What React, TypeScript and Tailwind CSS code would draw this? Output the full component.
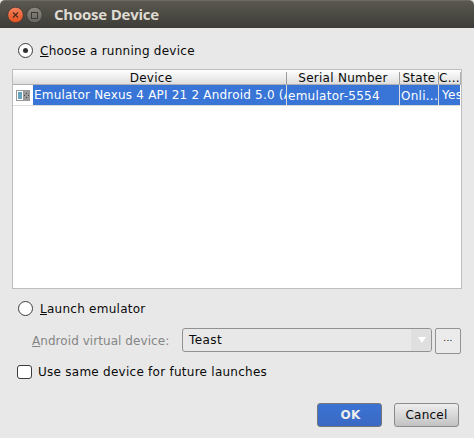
import type { ReactNode } from "react";

function Radio({ checked }: { checked?: boolean }) {
  return (
    <span className="flex size-[15px] shrink-0 items-center justify-center rounded-full border border-[#3c3c3c] bg-white">
      {checked && <span className="size-[5px] rounded-full bg-[#303030]" />}
    </span>
  );
}

function Head({ children, className }: { children: ReactNode; className: string }) {
  return <div className={"flex h-3 items-center justify-center pt-0.5 whitespace-nowrap " + className}>{children}</div>;
}

export default function App() {
  return (
    <div className="flex h-[438px] w-[474px] flex-col overflow-hidden bg-[#e8e8e8] font-['DejaVu_Sans',sans-serif] text-[12px] leading-[15px] tracking-[0.26px] text-[#0a0a0a]">
      <header className="flex h-7 shrink-0 items-center rounded-t-[5px] border-t border-[#6b6962] bg-linear-to-b from-[#5a5850] to-[#3d3c37] pl-[7px]">
        <svg width="36" height="18" viewBox="0 0 36 18" className="shrink-0">
          <defs>
            <linearGradient id="close" x2="0" y2="1">
              <stop stopColor="#f4825d" />
              <stop offset="1" stopColor="#e2501f" />
            </linearGradient>
            <linearGradient id="max" x2="0" y2="1">
              <stop stopColor="#8b8981" />
              <stop offset="1" stopColor="#66645e" />
            </linearGradient>
          </defs>
          <circle cx="8.5" cy="9" r="7.8" fill="url(#close)" stroke="#36342f" strokeWidth=".7" />
          <path d="M6 6.5l5 5M11 6.5l-5 5" stroke="#48291c" strokeWidth="1.1" />
          <circle cx="27.5" cy="9" r="7.8" fill="url(#max)" stroke="#36342f" strokeWidth=".7" />
          <rect x="24.5" y="6.5" width="6" height="6" fill="none" stroke="#3b3a35" />
        </svg>
        <h1 className="ml-[11px] font-['Open_Sans',sans-serif] text-[15px] font-bold tracking-[-0.22px] whitespace-nowrap text-[#dfdbd2]">Choose Device</h1>
      </header>

      <label className="mt-[15px] ml-[18px] flex h-[15px] items-center gap-[7px] whitespace-nowrap">
        <Radio checked />
        <span className="mt-0.5"><u>C</u>hoose a running device</span>
      </label>

      <section className="mt-[11px] ml-3 flex h-[220px] w-[450px] shrink-0 flex-col border border-[#bdbdbd] bg-white">
        <div className="flex h-[15px] items-center border-b border-[#b0b0b0] bg-linear-to-b from-white to-[#dedede] pt-px">
          <Head className="w-[274px] border-r border-[#9c9c9c] pl-[3px]">Device</Head>
          <Head className="w-[113px] border-r border-[#9c9c9c]">Serial Number</Head>
          <Head className="w-[39px] border-r border-[#9c9c9c]">State</Head>
          <Head className="w-[22px] border-r border-[#b0b0b0]">C...</Head>
        </div>
        <div className="flex h-[21px] w-[447px] border-b border-[#dcdcdc] text-white">
          <div className="flex w-5 shrink-0 items-center pl-[3px]">
            <svg width="14" height="11" viewBox="0 0 14 11">
              <path d="M0 0h14v11H0z" fill="#999" />
              <path d="M1 1h6v9H1z" fill="#fff" />
              <path d="M2 2h4v7H2z" fill="#67a5bd" />
              <path d="M10 3h1v1h-1zM8 5h1v1H8zM12 5h1v1h-1zM10 7h1v1h-1z" fill="#444" />
            </svg>
          </div>
          <div className="w-[254px] shrink-0 overflow-hidden border-r border-[#dcdcdc] bg-[#3875d7] pt-[3px] pl-px tracking-[0.2px] whitespace-nowrap">Emulator Nexus 4 API 21 2 Android 5.0 (A</div>
          <div className="w-[113px] shrink-0 border-r border-[#dcdcdc] bg-[#3875d7] pt-1 pl-px">emulator-5554</div>
          <div className="w-[39px] shrink-0 border-r border-[#dcdcdc] bg-[#3875d7] pt-1 pl-px">Onli...</div>
          <div className="w-[21px] shrink-0 overflow-hidden bg-[#3875d7] pt-[3px] pl-[3px]">Yes</div>
        </div>
      </section>

      <label className="mt-3 ml-[18px] flex h-[15px] items-center gap-[7px] whitespace-nowrap">
        <Radio />
        <span className="mt-0.5"><u>L</u>aunch emulator</span>
      </label>

      <div className="mt-3 ml-8 flex h-[26px] shrink-0 items-start">
        <span className="mt-[6px] w-[150px] tracking-[0.06px] whitespace-nowrap text-[#858585]"><u>A</u>ndroid virtual device:</span>
        <div className="flex h-6 w-[250px] justify-between overflow-hidden rounded-[3px] border border-[#929292]">
          <span className="mt-1 ml-1.5 tracking-[0.4px]">Teast</span>
          <span className="flex w-5 items-center justify-center bg-[#dfdfdf]">
            <svg width="8" height="6" viewBox="0 0 8 6" className="ml-0.5"><path d="M0 0h8L4 6z" fill="#fff" /></svg>
          </span>
        </div>
        <button className="ml-[3px] flex h-[26px] w-[26px] justify-center rounded-[2px] border border-[#929292] bg-[#ebebeb] pt-0.5 text-[9px]">...</button>
      </div>

      <label className="mt-[10px] ml-[17px] flex h-[15px] shrink-0 items-center gap-1.5 whitespace-nowrap">
        <span className="h-[14px] w-[15px] rounded-[3px] border border-[#3c3c3c] bg-white" />
        <span className="mt-0.5">Use same device for future launches</span>
      </label>

      <footer className="mt-[24px] ml-[317px] flex gap-3">
        <button className="h-6 w-[65px] rounded-[3px] border border-[#777] bg-linear-to-b from-[#3b73d4] to-[#3a69c3] pl-0.5 font-bold text-[#eee]">OK</button>
        <button className="h-6 w-[65px] rounded-[3px] border border-[#8b8b8b] bg-linear-to-b from-[#eeeeee] to-[#c2c2c2]">Cancel</button>
      </footer>
    </div>
  );
}
